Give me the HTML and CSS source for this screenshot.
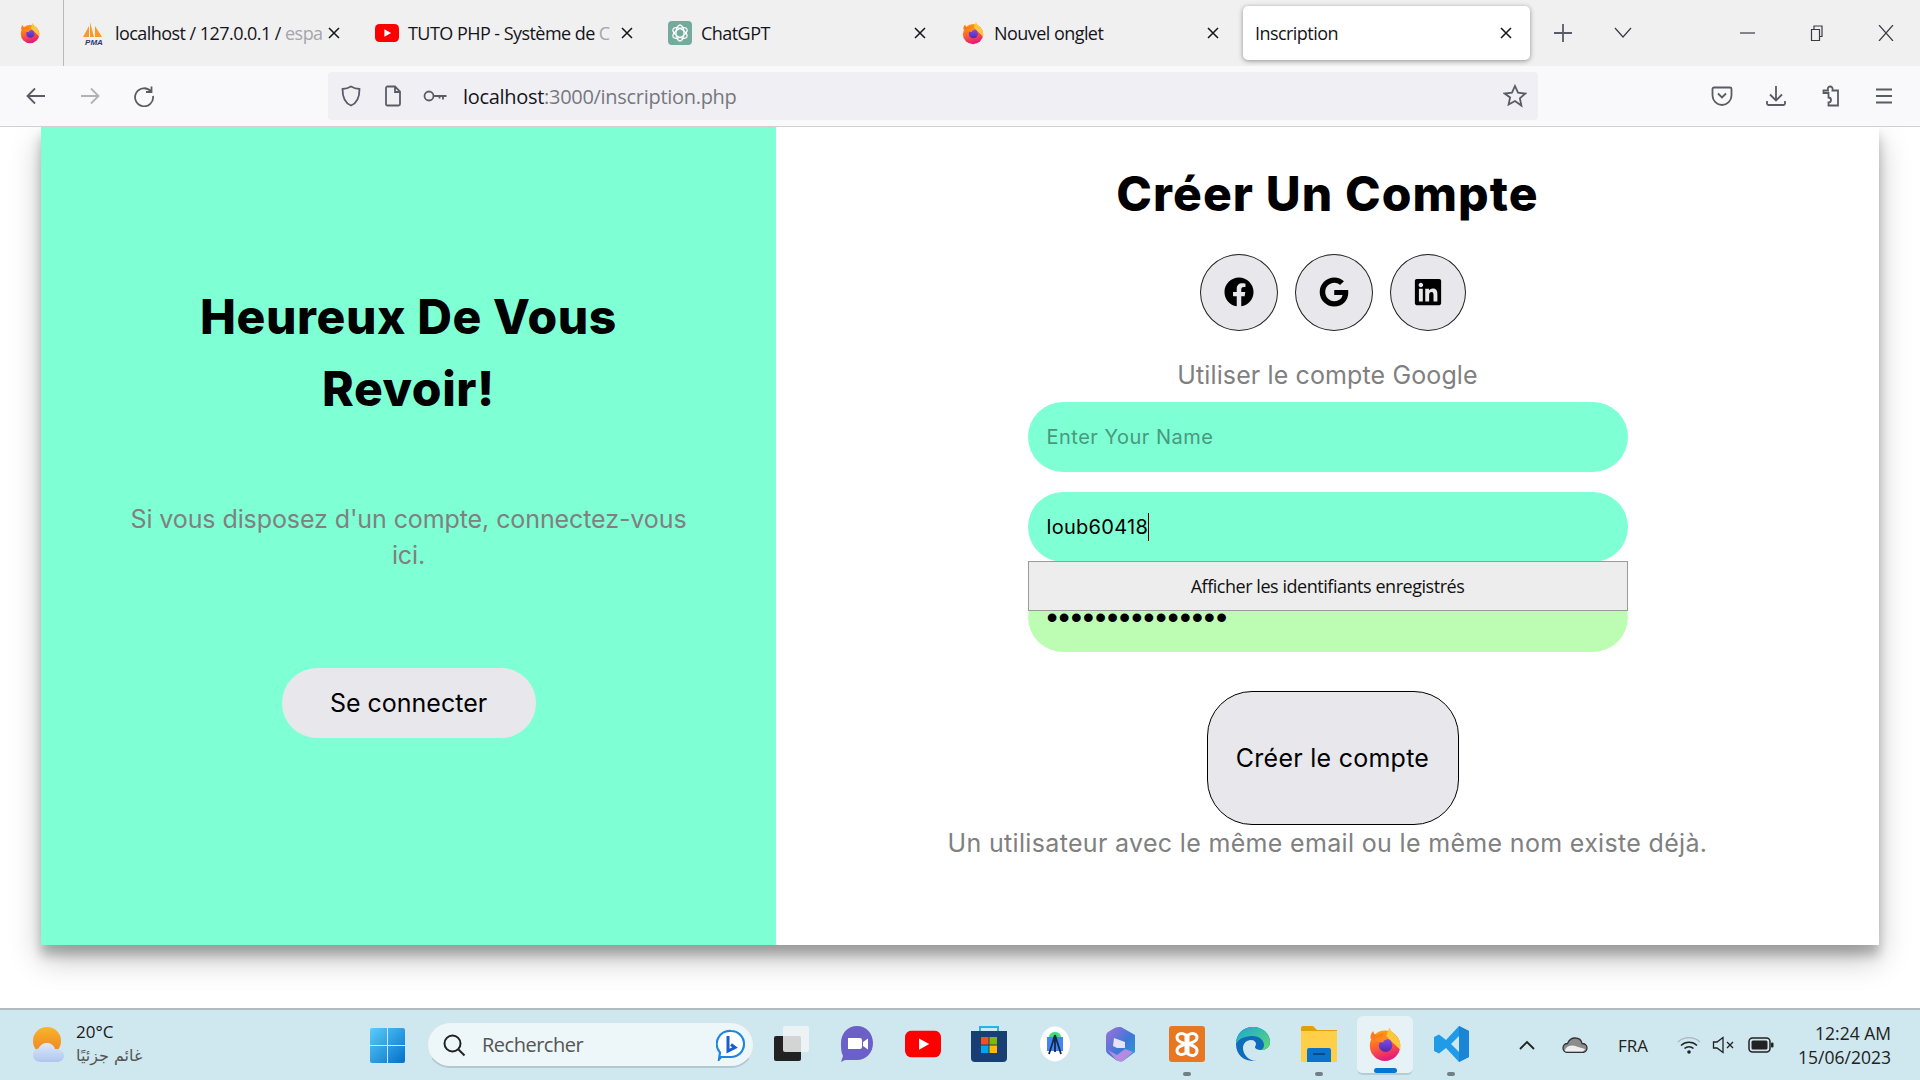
FILE: index.html
```html
<!DOCTYPE html>
<html lang="fr">
<head>
    <meta charset="UTF-8">
    <title>Inscription</title>
    <link rel="stylesheet" href="styles.css">
</head>
<body>
    <svg class="defs" width="0" height="0">
        <defs>
            <linearGradient id="ff-body" x1="0" y1="0" x2="0.3" y2="1">
                <stop offset="0" stop-color="#ffb000"/>
                <stop offset="0.5" stop-color="#ff6a2a"/>
                <stop offset="1" stop-color="#e81c7a"/>
            </linearGradient>
            <linearGradient id="ff-globe" x1="0" y1="0" x2="0" y2="1">
                <stop offset="0" stop-color="#8a4be8"/>
                <stop offset="1" stop-color="#4c2bb0"/>
            </linearGradient>
            <linearGradient id="edge-a" x1="0" y1="0" x2="1" y2="1">
                <stop offset="0" stop-color="#1aa5d8"/>
                <stop offset="1" stop-color="#5fdc6c"/>
            </linearGradient>
            <linearGradient id="m365-a" x1="0" y1="0" x2="1" y2="1">
                <stop offset="0" stop-color="#a56fd8"/>
                <stop offset="0.55" stop-color="#3d78d8"/>
                <stop offset="1" stop-color="#2aa0d8"/>
            </linearGradient>
            <linearGradient id="win-a" x1="0" y1="0" x2="1" y2="1">
                <stop offset="0" stop-color="#5ccdf8"/>
                <stop offset="1" stop-color="#0070cc"/>
            </linearGradient>
            <linearGradient id="sun-a" x1="0" y1="0" x2="0" y2="1">
                <stop offset="0" stop-color="#f8b52c"/>
                <stop offset="1" stop-color="#ee8020"/>
            </linearGradient>
            <linearGradient id="cloud-a" x1="0" y1="0" x2="0" y2="1">
                <stop offset="0" stop-color="#dfe9fa"/>
                <stop offset="1" stop-color="#aec6ee"/>
            </linearGradient>
            <symbol id="firefox" viewBox="0 0 32 32">
                <circle cx="16" cy="17.500" r="13.500" fill="url(#ff-body)"/>
                <path d="M20 1c1 4 4 5 7 9 3 4 3 8 2.500 11L17 9z" fill="#ffc83a"/>
                <path d="M3 11c0-3 1-5 2.500-6.500C6 7 7 8 9 8.500c2-1.500 4-2 6-2L10 14z" fill="#ff7a1f"/>
                <circle cx="16.500" cy="17" r="6" fill="url(#ff-globe)"/>
                <path d="M7 12c3-3 8-3.500 11-2 1 .5 1 1.500-.5 2-2 .5-3 1-3 2.500-3 0-5 0-7.500-2.500z" fill="#ff8a1e"/>
            </symbol>
            <symbol id="youtube" viewBox="0 0 32 24">
                <rect width="32" height="24" rx="6" fill="#f00"/>
                <path d="M12.500 7l9 5-9 5z" fill="#fff"/>
            </symbol>
        </defs>
    </svg>

    <div class="screen">
        <header class="tabbar">
            <div class="browser-logo"><svg class="i22"><use href="#firefox"/></svg></div>
            <div class="tabs">
                <div class="tab">
                    <svg class="tab-icon" viewBox="0 0 24 24">
                        <path d="M1 16L7 5v11zM8 16V1l4 15zM13 16V5l7 11h-3z" fill="#f79a2c"/>
                        <text x="12" y="23.500" text-anchor="middle" class="pma">PMA</text>
                    </svg>
                    <span class="tab-title">localhost / 127.0.0.1 / <span class="fade">espa</span></span>
                    <svg class="tab-close" viewBox="0 0 14 14"><path d="M2 2l10 10M12 2L2 12"/></svg>
                </div>
                <div class="tab">
                    <svg class="tab-icon" viewBox="0 0 32 24"><use href="#youtube"/></svg>
                    <span class="tab-title">TUTO PHP - Système de <span class="fade">C</span></span>
                    <svg class="tab-close" viewBox="0 0 14 14"><path d="M2 2l10 10M12 2L2 12"/></svg>
                </div>
                <div class="tab">
                    <svg class="tab-icon" viewBox="0 0 24 24">
                        <rect width="24" height="24" rx="4" fill="#74aa9c"/>
                        <g fill="none" stroke="#fff" stroke-width="1.300">
                            <ellipse cx="12" cy="12" rx="4" ry="8"/>
                            <ellipse cx="12" cy="12" rx="4" ry="8" transform="rotate(60 12 12)"/>
                            <ellipse cx="12" cy="12" rx="4" ry="8" transform="rotate(120 12 12)"/>
                        </g>
                    </svg>
                    <span class="tab-title">ChatGPT</span>
                    <svg class="tab-close" viewBox="0 0 14 14"><path d="M2 2l10 10M12 2L2 12"/></svg>
                </div>
                <div class="tab">
                    <svg class="tab-icon" viewBox="0 0 32 32"><use href="#firefox"/></svg>
                    <span class="tab-title">Nouvel onglet</span>
                    <svg class="tab-close" viewBox="0 0 14 14"><path d="M2 2l10 10M12 2L2 12"/></svg>
                </div>
                <div class="tab active">
                    <span class="tab-title">Inscription</span>
                    <svg class="tab-close" viewBox="0 0 14 14"><path d="M2 2l10 10M12 2L2 12"/></svg>
                </div>
            </div>
            <div class="tab-btn"><svg class="i20 line" viewBox="0 0 20 20"><path d="M10 1v18M1 10h18"/></svg></div>
            <div class="tab-btn"><svg class="i20 thin" viewBox="0 0 20 20"><path d="M2 5l8 9 8-9"/></svg></div>
            <div class="win-controls">
                <div class="win-btn"><svg class="i16 thin" viewBox="0 0 16 16"><path d="M0 8h15"/></svg></div>
                <div class="win-btn"><svg class="i16 thin" viewBox="0 0 16 16"><path d="M2.500 4.500h8v11h-8zM5 4.500V1h8v10.500h-2.500"/></svg></div>
                <div class="win-btn"><svg class="i16 thin" viewBox="0 0 16 16"><path d="M1 0l14 16M15 0L1 16"/></svg></div>
            </div>
        </header>

        <nav class="toolbar">
            <div class="tool-btn"><svg class="i22 line" viewBox="0 0 22 22"><path d="M20 11H3M10 3.500L2.500 11l7.500 7.500"/></svg></div>
            <div class="tool-btn disabled"><svg class="i22 line" viewBox="0 0 22 22"><path d="M2 11h17M12 3.500l7.500 7.500-7.500 7.500"/></svg></div>
            <div class="tool-btn"><svg class="i22 line" viewBox="0 0 22 22"><path d="M18 6.500A9 9 0 1 0 20 11M18.500 1.500v5.500H13"/></svg></div>
            <div class="urlbar">
                <div class="url-slot"><svg class="i22 line" viewBox="0 0 22 22"><path d="M11 1.500c3 1.800 5.500 2.300 8.500 2.500 0 8-2 14-8.500 16.500C4.500 18 2.500 12 2.500 4c3-.2 5.500-.7 8.500-2.500z"/></svg></div>
                <div class="url-slot"><svg class="i22 line" viewBox="0 0 22 22"><path d="M5 1.500h8l5 5V19a1.500 1.500 0 0 1-1.500 1.500h-11.500A1.500 1.500 0 0 1 4 19V3A1.500 1.500 0 0 1 5 1.500zM13 1.500V7h5"/></svg></div>
                <div class="url-slot"><svg class="i24 line" viewBox="0 0 24 24"><circle cx="6" cy="12" r="4.500"/><path d="M10.500 12h13M20 12v3.500M16.500 12v2.500"/></svg></div>
                <div class="url-text">localhost<span class="url-muted">:3000/inscription.php</span></div>
                <div class="url-slot star"><svg class="i24 line" viewBox="0 0 24 24"><path d="M12 2l3 6.700 7.300.8-5.400 4.900 1.500 7.200L12 17l-6.400 3.600 1.500-7.200L1.700 9.500 9 8.700z"/></svg></div>
            </div>
            <div class="tool-btn first-right"><svg class="i22 line" viewBox="0 0 22 22"><path d="M3 2.500h16a1.500 1.500 0 0 1 1.500 1.500v6.500a9.500 9.500 0 0 1-19 0V4A1.500 1.500 0 0 1 3 2.500zM7 8.500l4 4 4-4"/></svg></div>
            <div class="tool-btn"><svg class="i22 line" viewBox="0 0 22 22"><path d="M11 1v14M5 9.500l6 6 6-6M2 16v2.500A1.500 1.500 0 0 0 3.500 20h15a1.500 1.500 0 0 0 1.500-1.500V16"/></svg></div>
            <div class="tool-btn"><svg class="i22 line" viewBox="0 0 22 22"><path d="M11 1.500c2 0 3 1.500 2.500 4H19v15H9.500v-3c1.500 0 2.500-1 2.500-2.500s-1-2.500-2.500-2.500V8H4.500V5.500h4.500C8.500 3 9 1.500 11 1.500z"/></svg></div>
            <div class="tool-btn"><svg class="i22 line" viewBox="0 0 22 22"><path d="M3 4.500h16M3 11h16M3 17.500h16"/></svg></div>
        </nav>

        <main class="page">
            <section class="card">
                <div class="panel-left">
                    <h2 class="panel-title">Heureux De Vous<br>Revoir!</h2>
                    <p class="panel-text">Si vous disposez d'un compte, connectez-vous ici.</p>
                    <button class="btn-login">Se connecter</button>
                </div>
                <div class="panel-right">
                    <h1 class="form-title">Créer Un Compte</h1>
                    <div class="socials">
                        <a class="social"><svg class="fa" viewBox="0 0 512 512"><path d="M504 256C504 119 393 8 256 8S8 119 8 256c0 123.780 90.690 226.380 209.250 245V327.690h-63V256h63v-54.640c0-62.150 37-96.480 93.670-96.480 27.140 0 55.520 4.840 55.520 4.840v61h-31.280c-30.800 0-40.410 19.120-40.410 38.730V256h68.780l-11 71.690h-57.780V501C413.310 482.380 504 379.780 504 256z"/></svg></a>
                        <a class="social"><svg class="fa" viewBox="0 0 488 512"><path d="M488 261.800C488 403.300 391.100 504 248 504 110.800 504 0 393.200 0 256S110.800 8 248 8c66.800 0 123 24.500 166.300 64.900l-67.500 64.900C258.500 52.600 94.300 116.600 94.300 256c0 86.500 69.100 156.600 153.700 156.600 98.200 0 135-70.400 140.800-106.900H248v-85.300h236.100c2.300 12.700 3.900 24.900 3.900 41.400z"/></svg></a>
                        <a class="social"><svg class="fa" viewBox="0 0 448 512"><path d="M416 32H31.900C14.300 32 0 46.500 0 64.300v383.400C0 465.500 14.300 480 31.900 480H416c17.600 0 32-14.500 32-32.300V64.300c0-17.800-14.400-32.300-32-32.300zM135.400 416H69V202.200h66.500V416zm-33.200-243c-21.300 0-38.500-17.300-38.500-38.500S80.900 96 102.200 96c21.200 0 38.500 17.300 38.500 38.500 0 21.300-17.200 38.500-38.500 38.500zm282.100 243h-66.400V312c0-24.800-.5-56.700-34.500-56.700-34.600 0-39.900 27-39.900 54.900V416h-66.400V202.200h63.700v29.200h.9c8.900-16.800 30.600-34.500 62.900-34.500 67.200 0 79.700 44.300 79.700 101.900V416z"/></svg></a>
                    </div>
                    <p class="hint google">Utiliser le compte Google</p>
                    <div class="fields">
                        <div class="field placeholder">Enter Your Name</div>
                        <div class="field focused">
                            <span>loub60418</span><span class="caret"></span>
                            <div class="autofill">Afficher les identifiants enregistrés</div>
                        </div>
                        <div class="field filled">•••••••••••••••</div>
                    </div>
                    <button class="btn-create">Créer le compte</button>
                    <p class="hint error">Un utilisateur avec le même email ou le même nom existe déjà.</p>
                </div>
            </section>
        </main>

        <footer class="taskbar">
            <div class="weather">
                <svg class="weather-icon" viewBox="0 0 34 36">
                    <ellipse cx="15" cy="14" rx="14" ry="14" fill="url(#sun-a)"/>
                    <path d="M9 35c-5 0-8-3-8-7 0-3.500 2.500-6 5.500-6.500C8 18 11.500 16 15 16c4 0 7 2.500 8 6 5 0 9 2.500 9 6.500 0 4-3 6.500-7 6.500z" fill="url(#cloud-a)"/>
                </svg>
                <div class="weather-text">
                    <div class="temp">20°C</div>
                    <div class="sky" dir="rtl">غائم جزئيًا</div>
                </div>
            </div>
            <svg class="win-logo" viewBox="0 0 35 35">
                <path d="M0 2a2 2 0 0 1 2-2h15v17H0zM18 0h15a2 2 0 0 1 2 2v15H18zM0 18h17v17H2a2 2 0 0 1-2-2zM18 18h17v15a2 2 0 0 1-2 2H18z" fill="url(#win-a)"/>
            </svg>
            <div class="search">
                <svg class="search-icon" viewBox="0 0 24 24"><circle cx="10.500" cy="10.500" r="8"/><path d="M16.500 16.500l6 6"/></svg>
                <span class="search-text">Rechercher</span>
                <svg class="bing" viewBox="0 0 30 32">
                    <path d="M15 2a13 13 0 0 1 0 26H5l-2 2.500 1-7A13 13 0 0 1 15 2z" fill="#fff" stroke="#1b86e0" stroke-width="2.200"/>
                    <path d="M12 7v15l7-3.500-4-3" fill="none" stroke="#1a5fd0" stroke-width="3"/>
                </svg>
            </div>
            <div class="apps">
                <div class="app">
                    <svg class="app-icon" viewBox="0 0 36 36">
                        <rect x="1" y="10" width="27" height="25" rx="2" fill="#222"/>
                        <rect x="10" y="0" width="26" height="26" rx="2" fill="#f2f4f4" fill-opacity=".85"/>
                    </svg>
                </div>
                <div class="app">
                    <svg class="app-icon" viewBox="0 0 36 36">
                        <path d="M18 0c9 0 16 7 16 17s-7 17-16 17H6l-4 2 2-6C2 26 2 22 2 17 2 7 9 0 18 0z" fill="#6b5fc8"/>
                        <path d="M9 12h12a2 2 0 0 1 2 2v7a2 2 0 0 1-2 2H9zM24 16l5-3.500v11L24 20z" fill="#fff"/>
                    </svg>
                </div>
                <div class="app"><svg class="app-icon" viewBox="0 0 32 24"><use href="#youtube"/></svg></div>
                <div class="app">
                    <svg class="app-icon" viewBox="0 0 36 36">
                        <path d="M9 6V1h18v5" fill="none" stroke="#25b4e8" stroke-width="2"/>
                        <path d="M0 5h36v27a4 4 0 0 1-4 4H4a4 4 0 0 1-4-4z" fill="#173f74"/>
                        <rect x="10" y="11" width="7.500" height="7.500" fill="#f25022"/>
                        <rect x="18.500" y="11" width="7.500" height="7.500" fill="#7fba00"/>
                        <rect x="10" y="19.500" width="7.500" height="7.500" fill="#00a4ef"/>
                        <rect x="18.500" y="19.500" width="7.500" height="7.500" fill="#ffb900"/>
                    </svg>
                </div>
                <div class="app">
                    <svg class="app-icon" viewBox="0 0 36 36">
                        <ellipse cx="18" cy="18" rx="15" ry="17.500" fill="#fff"/>
                        <path d="M12 11a6 5 0 0 1 12 0z" fill="#3ddc84"/>
                        <rect x="10" y="11" width="16" height="14" fill="#4285f4"/>
                        <path d="M18 9l-6 19M18 9l6 19M18 12v14" fill="none" stroke="#12284c" stroke-width="1.800"/>
                    </svg>
                </div>
                <div class="app">
                    <svg class="app-icon" viewBox="0 0 36 36">
                        <path d="M18 1l14 8v17l-12 9c-3 1-5 0-7-1L5 28c-2-1.500-2-3-2-5V10c0-2 1-3 2-4l5-3c3-2 5-2 8-2z" fill="url(#m365-a)"/>
                        <path d="M11 12l11 4v6l-8 0-4-2z" fill="#e8e2f8"/>
                        <path d="M5 24l9 5 8-6 8 3-10 9c-3 1-5 0-7-1z" fill="#b58ae0"/>
                    </svg>
                </div>
                <div class="app has-dot">
                    <svg class="app-icon" viewBox="0 0 36 36">
                        <rect width="36" height="36" rx="3" fill="#e87722"/>
                        <path d="M17 9c-5-3-9-1-9 2.500 0 3 3 4.500 6 5.500v2c-3 1-6 2.500-6 5.500C8 28 12 30 17 27V9zM19 9c5-3 9-1 9 2.500 0 3-3 4.500-6 5.500v2c3 1 6 2.500 6 5.500 0 4.500-4 6.500-9 3.500z" fill="none" stroke="#fff" stroke-width="3"/>
                    </svg>
                </div>
                <div class="app">
                    <svg class="app-icon" viewBox="0 0 36 36">
                        <path d="M1 18C1 8 8 1 18 1c10 0 17 7 17 15 0 5-4 8-9 8-3 0-6-1-6-3 0-1 1-1.500 1-3 0-2-2-4-5-4-5 0-8 4-8 8 0 6 5 13 14 13C10 36 1 30 1 18z" fill="#0f6cbd"/>
                        <path d="M1 18C1 8 8 1 18 1c10 0 17 7 17 15 0 5-4 8-9 8 2-1 3-3 3-5 0-5-5-9-11-9C11 10 4 12 1 18z" fill="url(#edge-a)"/>
                    </svg>
                </div>
                <div class="app has-dot">
                    <svg class="app-icon" viewBox="0 0 36 36">
                        <path d="M0 2a2 2 0 0 1 2-2h10l4 4h20v8H0z" fill="#dfa008"/>
                        <path d="M0 5h36v31H0z" fill="#ffcf4a"/>
                        <path d="M6 36V24a2 2 0 0 1 2-2h20a2 2 0 0 1 2 2v12z" fill="#0a74cc"/>
                        <path d="M12 28h12" stroke="#054b8a" stroke-width="2"/>
                    </svg>
                </div>
                <div class="app running">
                    <svg class="app-icon" viewBox="0 0 32 32"><use href="#firefox"/></svg>
                </div>
                <div class="app has-dot">
                    <svg class="app-icon" viewBox="0 0 36 36">
                        <path d="M26 0l10 5v26l-10 5-13-14-7 5.500L1 25V11l5-2.500L13 14zM26 10l-8 8 8 8z" fill="#1f9be8"/>
                        <path d="M26 0l10 5v26l-10 5z" fill="#1a85d4"/>
                    </svg>
                </div>
            </div>
            <div class="tray">
                <svg class="tray-chevron" viewBox="0 0 16 10"><path d="M1 9l7-7 7 7"/></svg>
                <svg class="tray-cloud" viewBox="0 0 26 16">
                    <path d="M6 15.500c-3 0-5-1.800-5-4.500s2-4.500 4.500-4.500C7 3 10 1 13 1c4 0 6.500 2.500 7 5.500 3 0 5 2 5 4.500s-2 4.500-5 4.500z" fill="#8c8c8c" stroke="#333" stroke-width="1.300"/>
                    <path d="M3 13.500c0-2 3-5 7-5 3 0 7 2 13 3.500-1 2-2 2.500-3 2.500H6c-2 0-3 0-3-1z" fill="#eee"/>
                </svg>
                <span class="tray-lang">FRA</span>
                <svg class="tray-wifi" viewBox="0 0 24 18">
                    <path d="M1 6a16 16 0 0 1 22 0" fill="none" stroke="#a9b7bc" stroke-width="1.300"/>
                    <path d="M4 9.500a11.500 11.500 0 0 1 16 0M7.500 12.500a6.500 6.500 0 0 1 9 0" fill="none" stroke="#222" stroke-width="1.500"/>
                    <circle cx="12" cy="16" r="1.800" fill="#222"/>
                </svg>
                <svg class="tray-sound" viewBox="0 0 24 18"><path d="M1.500 6v6h3.500l6 4.500v-15L5 6zM15 6l6 6M21 6l-6 6"/></svg>
                <svg class="tray-battery" viewBox="0 0 26 16">
                    <rect x="1" y="1" width="21" height="14" rx="3.500" fill="none" stroke="#222" stroke-width="1.500"/>
                    <rect x="3.500" y="3.500" width="16" height="9" rx="1.500" fill="#222"/>
                    <rect x="23" y="5.500" width="2.500" height="5" rx="1" fill="#222"/>
                </svg>
                <div class="clock">
                    <div>12:24 AM</div>
                    <div>15/06/2023</div>
                </div>
            </div>
        </footer>
    </div>
</body>
</html>
```

FILE: styles.css
```css
* {
    box-sizing: border-box;
}
html, body {
    margin: 0;
    padding: 0;
}
body {
    font-family: 'Inter', sans-serif;
    background: white;
    color: black;
}
.defs {
    position: absolute;
}
.screen {
    display: flex;
    flex-direction: column;
    width: 1920px;
    height: 1080px;
    overflow: hidden;
}

/* svg sizes */
.i16 { width: 16px; height: 16px; }
.i20 { width: 20px; height: 20px; }
.i22 { width: 22px; height: 22px; }
.i24 { width: 24px; height: 24px; }
.line, .thin {
    fill: none;
    stroke: #5b5b66;
    stroke-width: 1.800;
}
.thin {
    stroke: #3a3a42;
    stroke-width: 1.200;
}

/* tabs */
.tabbar {
    display: flex;
    flex: 0 0 66px;
    align-items: center;
    background: #f0f0f1;
    font-family: 'Open Sans', sans-serif;
}
.browser-logo {
    display: flex;
    align-items: center;
    justify-content: center;
    width: 64px;
    height: 66px;
    padding-right: 4px;
    padding-bottom: 1px;
    border-right: 1px solid #b9b9b9;
}
.tabs {
    display: flex;
    gap: 6px;
    margin-left: 7px;
    margin-right: 3px;
}
.tab {
    display: flex;
    align-items: center;
    width: 287px;
    height: 54px;
    padding: 0 17px 0 11px;
    font-size: 18px;
    color: #15141a;
}
.tab.active {
    padding-left: 12px;
    background: white;
    border-radius: 5px;
    box-shadow: 0 1px 5px rgba(0, 0, 0, 0.4);
}
.tab-icon {
    flex: none;
    width: 24px;
    height: 24px;
    margin-right: 9px;
}
.pma {
    font-family: 'Liberation Sans', sans-serif;
    font-size: 8px;
    font-weight: 700;
    font-style: italic;
    fill: #2b3a6b;
}
.tab-title {
    flex: 1;
    white-space: nowrap;
    letter-spacing: -0.55px;
}
.fade {
    color: #a5a5aa;
}
.tab-close {
    flex: none;
    width: 14px;
    height: 14px;
    fill: none;
    stroke: #15141a;
    stroke-width: 1.500;
}
.tab-btn {
    display: flex;
    align-items: center;
    justify-content: center;
    width: 60px;
    height: 66px;
}
.win-controls {
    display: flex;
    margin-left: auto;
}
.win-btn {
    display: flex;
    align-items: center;
    justify-content: center;
    width: 69px;
    height: 66px;
}

/* toolbar */
.toolbar {
    display: flex;
    flex: 0 0 61px;
    align-items: center;
    padding-left: 9px;
    background: #f9f9fb;
    border-bottom: 1px solid #cfcfd4;
}
.tool-btn {
    display: flex;
    align-items: center;
    justify-content: center;
    width: 54px;
    height: 48px;
}
.tool-btn.disabled {
    opacity: 0.45;
}
.tool-btn.first-right {
    margin-left: 157px;
}
.urlbar {
    display: flex;
    align-items: center;
    width: 1210px;
    height: 48px;
    margin-left: 157px;
    padding: 0 2px 0 2px;
    background: #f0f0f4;
    border-radius: 4px;
}
.url-slot {
    display: flex;
    align-items: center;
    justify-content: center;
    width: 42px;
    height: 48px;
}
.url-slot.star {
    margin-left: auto;
}
.url-text {
    margin-left: 7px;
    font-family: 'Open Sans', sans-serif;
    font-size: 20px;
    letter-spacing: -0.3px;
    color: #15141a;
}
.url-muted {
    color: #77777f;
}

/* page */
.page {
    flex: 1;
    padding: 0 41px;
    overflow: hidden;
    background: white;
}
.card {
    display: flex;
    height: 818px;
    background: white;
    box-shadow: 0 14px 28px rgba(0, 0, 0, 0.25), 0 10px 10px rgba(0, 0, 0, 0.22);
}
.panel-left {
    display: flex;
    flex: 0 0 735px;
    flex-direction: column;
    align-items: center;
    padding-top: 154px;
    background: #7fffd4;
    text-align: center;
}
.panel-title, .form-title {
    margin: 0;
    font-size: 48px;
    font-weight: 800;
    line-height: 72px;
}
.panel-title {
    letter-spacing: 0.6px;
}
.form-title {
    letter-spacing: 1.1px;
}
.panel-text {
    width: 570px;
    margin: 76px 0 0;
    font-size: 25px;
    line-height: 36px;
    letter-spacing: -0.09px;
    color: #808080;
}
.btn-login {
    width: 254px;
    height: 70px;
    margin-top: 95px;
    border: none;
    border-radius: 35px;
    background: #e8e8ec;
    font-family: inherit;
    font-size: 25px;
    color: black;
}
.panel-right {
    display: flex;
    flex: 1;
    flex-direction: column;
    align-items: center;
    padding-top: 31px;
}
.socials {
    display: flex;
    gap: 17px;
    margin-top: 24px;
    margin-left: 10px;
}
.social {
    display: flex;
    align-items: center;
    justify-content: center;
    width: 78px;
    height: 77px;
    padding-bottom: 2px;
    border: 1px solid #222;
    border-radius: 50%;
    background: #e8e8ec;
}
.social:last-child {
    width: 76px;
}
.fa {
    width: 30px;
    height: 30px;
}
.hint {
    margin: 0;
    font-size: 25px;
    line-height: 36px;
    color: #808080;
}
.hint.google {
    margin-top: 26px;
    letter-spacing: 0.12px;
}
.hint.error {
    letter-spacing: 0.33px;
}
.fields {
    display: flex;
    flex-direction: column;
    gap: 20px;
    margin-top: 9px;
}
.field {
    position: relative;
    display: flex;
    align-items: center;
    width: 600px;
    height: 70px;
    padding: 0 19px;
    border-radius: 35px;
    background: #7fffd4;
    font-size: 20px;
    letter-spacing: 0.3px;
}
.field.placeholder {
    color: #47997f;
    letter-spacing: 0.5px;
}
.field.filled {
    background: #bdfdb3;
    font-family: 'Liberation Sans', sans-serif;
    font-size: 32px;
    letter-spacing: 0.9px;
}
.caret {
    width: 1px;
    height: 28px;
    background: black;
}
.autofill {
    position: absolute;
    top: 69px;
    left: 0;
    z-index: 2;
    display: flex;
    align-items: center;
    justify-content: center;
    width: 600px;
    height: 50px;
    background: #ededed;
    border: 1px solid #9a9a9a;
    font-family: 'Open Sans', sans-serif;
    font-size: 18px;
    letter-spacing: -0.46px;
    color: #111;
}
.btn-create {
    width: 252px;
    height: 134px;
    margin-top: 39px;
    margin-left: 10px;
    padding-bottom: 2px;
    border: 1px solid black;
    border-radius: 45px;
    background: #e8e8ec;
    font-family: inherit;
    font-size: 25px;
    letter-spacing: 0.26px;
    color: black;
}

/* taskbar */
.taskbar {
    display: flex;
    flex: 0 0 72px;
    align-items: center;
    padding-left: 32px;
    background: #cfe7ee;
    border-top: 2px solid #b0bcc0;
    font-family: 'Open Sans', sans-serif;
}
.weather {
    display: flex;
    flex: 0 0 338px;
    align-items: center;
}
.weather-icon {
    width: 34px;
    height: 36px;
}
.weather-text {
    margin-left: 10px;
    margin-top: -2px;
}
.temp {
    font-size: 17px;
    line-height: 24px;
    color: #1a1a1a;
}
.sky {
    font-family: 'DejaVu Sans', sans-serif;
    font-size: 16px;
    line-height: 24px;
    color: #555;
}
.win-logo {
    flex: none;
    width: 35px;
    height: 35px;
}
.search {
    display: flex;
    flex: 0 0 327px;
    align-items: center;
    height: 46px;
    margin-left: 22px;
    padding: 0 7px 0 14px;
    background: #edf6f9;
    border: 1px solid #d5e4ea;
    border-bottom: 2px solid #b4c8d0;
    border-radius: 23px;
}
.search-icon {
    width: 24px;
    height: 24px;
    fill: none;
    stroke: #222;
    stroke-width: 2;
}
.search-text {
    margin-left: 16px;
    font-size: 20px;
    letter-spacing: -0.5px;
    color: #555;
}
.bing {
    width: 30px;
    height: 32px;
    margin-left: auto;
}
.apps {
    display: flex;
    margin-left: 4px;
}
.app {
    position: relative;
    display: flex;
    align-items: center;
    justify-content: center;
    width: 66px;
    height: 70px;
    padding-bottom: 2px;
}
.app-icon {
    width: 36px;
    height: 36px;
}
.app.has-dot::after {
    content: "";
    position: absolute;
    bottom: 4px;
    left: 29px;
    width: 8px;
    height: 4px;
    border-radius: 2px;
    background: #6f7f85;
}
.app.running::before {
    content: "";
    position: absolute;
    top: 6px;
    left: 5px;
    width: 56px;
    height: 57px;
    border-radius: 6px;
    background: #e6f2f6;
    border-bottom: 2px solid #b4ccd4;
}
.app.running::after {
    content: "";
    position: absolute;
    bottom: 7px;
    left: 22px;
    width: 23px;
    height: 5px;
    border-radius: 3px;
    background: #0078d4;
}
.app.running .app-icon {
    position: relative;
}
.tray {
    display: flex;
    align-items: center;
    margin-left: auto;
    padding-right: 29px;
}
.tray-chevron {
    width: 16px;
    height: 10px;
    margin-right: 27px;
    fill: none;
    stroke: #222;
    stroke-width: 1.800;
}
.tray-cloud {
    width: 26px;
    height: 16px;
}
.tray-lang {
    margin-left: 30px;
    font-size: 17px;
    color: #222;
}
.tray-wifi {
    width: 24px;
    height: 18px;
    margin-left: 29px;
}
.tray-sound {
    width: 24px;
    height: 18px;
    margin-left: 11px;
    fill: none;
    stroke: #222;
    stroke-width: 1.300;
}
.tray-battery {
    width: 26px;
    height: 16px;
    margin-left: 12px;
}
.clock {
    width: 117px;
    font-size: 17.5px;
    line-height: 24px;
    text-align: right;
    color: #222;
}
```
